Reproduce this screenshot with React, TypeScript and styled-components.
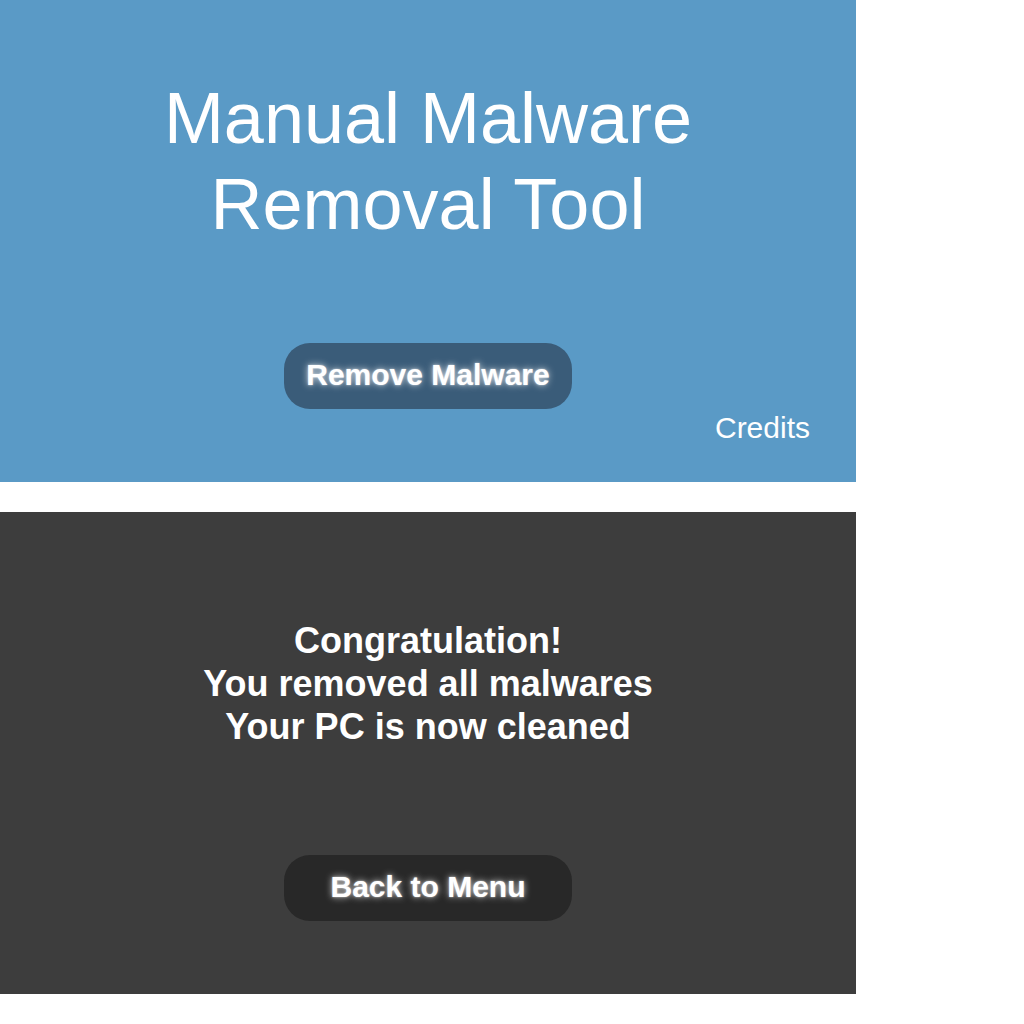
import React from 'react';
import styled, { createGlobalStyle } from 'styled-components';

const GlobalStyle = createGlobalStyle`
  html, body {
    margin: 0;
    padding: 0;
    background: #ffffff;
    font-family: "Liberation Sans", Arial, sans-serif;
  }
`;

const Page = styled.div`
  width: 856px;
  display: flex;
  flex-direction: column;
  gap: 30px;
`;

const Panel = styled.section<{ $bg: string; $top: number }>`
  height: 482px;
  box-sizing: border-box;
  padding-top: ${(p) => p.$top}px;
  background: ${(p) => p.$bg};
  display: flex;
  flex-direction: column;
  align-items: center;
  color: #ffffff;
`;

const Title = styled.h1`
  margin: 0;
  font-size: 72px;
  line-height: 86px;
  font-weight: 400;
  text-align: center;
`;

const Message = styled.p`
  margin: 0;
  font-size: 36px;
  line-height: 43px;
  font-weight: 700;
  text-align: center;
`;

const PillButton = styled.button<{ $bg: string; $mt: number }>`
  margin-top: ${(p) => p.$mt}px;
  width: 288px;
  height: 66px;
  padding: 0 0 3px;
  border: none;
  border-radius: 26px;
  background: ${(p) => p.$bg};
  color: #ffffff;
  font-family: "Liberation Sans", Arial, sans-serif;
  font-size: 30px;
  font-weight: 700;
  text-shadow: 0 0 7px rgba(255, 255, 255, 0.8), 0 0 2px rgba(255, 255, 255, 0.6);
  cursor: pointer;
`;

const CreditsRow = styled.div`
  align-self: stretch;
  display: flex;
  justify-content: flex-end;
  padding-right: 46px;
  margin-top: 2px;
`;

const Credits = styled.a`
  font-size: 30px;
  line-height: 34px;
  color: #ffffff;
  cursor: pointer;
`;

export default function App() {
  return (
    <>
      <GlobalStyle />
      <Page>
        <Panel $bg="#5a9ac6" $top={75}>
          <Title>
            Manual Malware
            <br />
            Removal Tool
          </Title>
          <PillButton $bg="#3a5c79" $mt={96}>Remove Malware</PillButton>
          <CreditsRow>
            <Credits>Credits</Credits>
          </CreditsRow>
        </Panel>
        <Panel $bg="#3d3d3d" $top={107}>
          <Message>
            Congratulation!
            <br />
            You removed all malwares
            <br />
            Your PC is now cleaned
          </Message>
          <PillButton $bg="#282828" $mt={107}>Back to Menu</PillButton>
        </Panel>
      </Page>
    </>
  );
}
